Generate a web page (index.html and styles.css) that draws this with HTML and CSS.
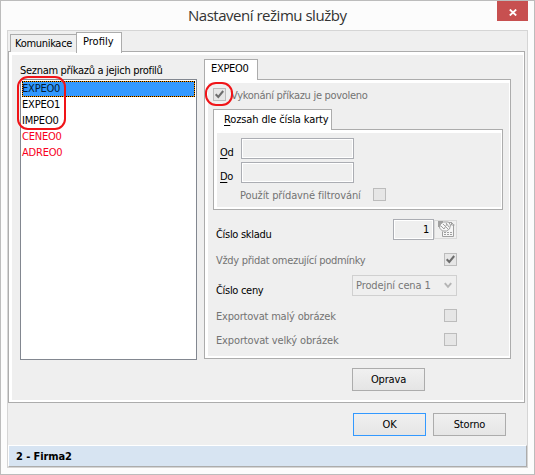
FILE: index.html
```html
<!DOCTYPE html>
<html lang="cs">
<head>
<meta charset="utf-8">
<title>Nastavení režimu služby</title>
<link rel="stylesheet" href="styles.css">
</head>
<body>
<div class="window">
  <header class="titlebar">
    <h1>Nastavení režimu služby</h1>
    <button class="close" aria-label="Zavřít"><svg width="8" height="7" viewBox="0 0 8 7"><path d="M.8.5 7.2 6.5M7.2.5.8 6.5"/></svg></button>
  </header>
  <main class="client">
    <nav class="tabs">
      <div class="tab inactive">Komunikace</div>
      <div class="tab active">Profily</div>
    </nav>
    <section class="page">
      <div class="left">
        <div class="caption">Seznam příkazů a jejich profilů</div>
        <div class="list">
          <div class="item selected">EXPEO0</div>
          <div class="item">EXPEO1</div>
          <div class="item">IMPEO0</div>
          <div class="item red">CENEO0</div>
          <div class="item red">ADREO0</div>
          <div class="mark mark-list"></div>
        </div>
      </div>
      <div class="right">
        <div class="tab profile-tab">EXPEO0</div>
        <div class="profile">
          <div class="enable">
            <span class="check"><svg width="11" height="11" viewBox="0 0 11 11"><path d="M1.7 5.2 4.3 8 9.2 2"/></svg></span>
            <span class="grey">Vykonání příkazu je povoleno</span>
            <div class="mark mark-check"></div>
          </div>
          <div class="tab range-tab"><u>R</u>ozsah dle čísla karty</div>
          <div class="range">
            <div class="field"><label><u>O</u>d</label><span class="input"></span></div>
            <div class="field"><label><u>D</u>o</label><span class="input"></span></div>
            <div class="filter"><span class="grey">Použít přídavné filtrování</span><span class="check"></span></div>
          </div>
          <div class="row stock"><label>Číslo skladu</label>
            <span class="control"><span class="input number">1</span><span class="lookup"><svg width="17" height="17" viewBox="0 0 17 17"><path class="fill" d="M0 0h5v2L2 6H0z"/><path class="paper" d="M7.5 1.5h6l2 2v12h-11v-5"/><path d="M13.5 1v3h3M6 11.5h2m1 0h2m1 0h2M6 13.5h2m1 0h2m1 0h2"/><path class="paper" d="m2.5 3 3-2h5l2 3-1 4-3 2h-4l-3-3z"/><path d="m5 3 5 5M8 2l3 4M9 3 6 8M3 5l3 3"/></svg></span></span></div>
          <div class="row always"><label class="grey">Vždy přidat omezující podmínky</label><span class="check"><svg width="11" height="11" viewBox="0 0 11 11"><path d="M1.7 5.2 4.3 8 9.2 2"/></svg></span></div>
          <div class="row price"><label>Číslo ceny</label><span class="select"><span>Prodejní cena 1</span><svg width="8" height="7" viewBox="0 0 8 7"><path d="M.8 1.2 4 4.8 7.2 1.2"/></svg></span></div>
          <div class="row small"><label class="grey">Exportovat malý obrázek</label><span class="check"></span></div>
          <div class="row large"><label class="grey">Exportovat velký obrázek</label><span class="check"></span></div>
        </div>
        <button class="button edit">Oprava</button>
      </div>
    </section>
    <div class="actions">
      <button class="button default">OK</button>
      <button class="button">Storno</button>
    </div>
    <footer class="status">2 - Firma2</footer>
  </main>
</div>
</body>
</html>
```
FILE: styles.css
```css
* { box-sizing: border-box; }
body { margin: 0; }
.window {
  width: 535px; height: 475px;
  border: 1px solid #bcbcbc;
  background: #fcfcfc;
  font: 11px/16px "DejaVu Sans Condensed", "DejaVu Sans", sans-serif;
  font-stretch: condensed;
  letter-spacing: -.3px;
  color: #000;
  white-space: nowrap;
  overflow: hidden;
}
.titlebar { height: 29px; display: flex; justify-content: flex-end; }
h1 {
  flex: 1; margin: 0; padding-left: 187px;
  font: 400 15px/28px "Open Sans", sans-serif;
  letter-spacing: -.48px;
  color: #333;
}
.close { width: 31px; height: 20px; margin-right: 6px; padding: 2px 0 0; border: 0; background: #c75050; display: grid; place-items: center; }
.close path { stroke: #fff; stroke-width: 1.8; fill: none; }
.client {
  width: 521px; height: 438px; margin-left: 6px;
  border: 1px solid #d5d5d5; background: #efefef;
}
.tabs { display: flex; align-items: flex-end; height: 21px; padding-left: 2px; }
.tab { border: 1px solid #acacac; border-bottom: 0; background: #fff; }
.inactive { width: 66px; height: 18px; border-right: 0; padding: 1px 0 0 4px; background: #efefef; }
.active { width: 46px; height: 21px; padding: 1px 0 0 6px; margin-bottom: -1px; position: relative; letter-spacing: 0; }
.page {
  width: 517px; height: 352px; margin-top: -1px;
  border: 1px solid #acacac; background: #efefef;
  box-shadow: inset 3px 3px #fff, inset -1px -2px #fff;
  display: flex; padding-left: 11px;
}
.left { width: 177px; padding-top: 11px; }
.caption { height: 16px; }
.list {
  position: relative; width: 177px; height: 281px;
  border: 1px solid #828790; background: #fff; padding: 1px;
}
.item { height: 16px; line-height: 16px; letter-spacing: -.2px; }
.selected {
  border: 1px dotted #000; line-height: 14px; text-indent: -1px; color: #001a35;
  background: linear-gradient(#39f, #39f) padding-box, linear-gradient(#f90, #f90) border-box;
}
.red { color: #f8001c; }
.mark { position: absolute; border: 2px solid #f01418; pointer-events: none; }
.mark-list { left: -4px; top: -4px; width: 49px; height: 54px; border-radius: 11px; }
.right { margin-left: 7px; padding-top: 7px; }
.profile-tab { width: 54px; height: 20px; padding: 1px 0 0 6px; }
.profile {
  width: 307px; height: 280px;
  border: 1px solid #acacac; background: #efefef;
  box-shadow: inset 3px 3px #fff, inset -1px -2px #fff;
  padding: 8px 0 0 8px;
}
.profile-tab, .range-tab { position: relative; }
.profile-tab::after, .range-tab::after, .active::after {
  content: ""; position: absolute; left: 0; right: 0; bottom: -2px; height: 2px; background: #fff;
}
.grey { color: #737373; }
.enable { position: relative; height: 21px; display: flex; }
.enable .grey { margin-left: 5px; }
.check { flex: none; width: 13px; height: 13px; border: 1px solid #bcbcbc; background: #e6e6e6; display: block; }
.check svg { display: block; }
.check path { stroke: #6d6d6d; stroke-width: 2; fill: none; }
.mark-check { left: -8px; top: -6px; width: 28px; height: 24px; border-radius: 11px; }
.range-tab { width: 119px; height: 20px; padding: 2px 0 0 10px; letter-spacing: -.12px; }
.range {
  width: 290px; height: 81px;
  border: 1px solid #acacac; background: #efefef;
  box-shadow: inset 3px 3px #fff, inset -1px -2px #fff;
  padding: 8px 0 0 6px;
}
.field { display: flex; height: 24px; }
.field label { width: 21px; padding-top: 7px; }
.input { width: 113px; height: 21px; border: 1px solid #abadb3; box-shadow: inset 0 0 0 1px #fff; }
u { text-underline-offset: 2px; }
.filter { display: flex; padding: 2px 0 0 20px; }
.filter .grey { width: 133px; letter-spacing: -.1px; }
.row { display: flex; justify-content: space-between; width: 244px; padding-left: 3px; }
.row label { padding-top: 8px; }
.stock { height: 34px; margin-top: 9px; }
.control { display: flex; }
.number { width: 41px; padding: 2px 4px 0 0; text-align: right; }
.lookup { width: 23px; height: 19px; margin-top: 1px; border: 1px solid #d9d9d9; display: block; padding-left: 3px; }
.lookup svg { display: block; }
.lookup path { stroke: #a0a0a0; stroke-width: 1; fill: none; }
.lookup .fill { fill: #a0a0a0; stroke: none; }
.lookup .paper { fill: #f6f6f6; }
.always { height: 22px; }
.always label, .small label, .large label { padding-top: 0; }
.small label { letter-spacing: -.2px; }
.large label { letter-spacing: -.14px; }
.price { height: 34px; }
.select { width: 105px; height: 21px; border: 1px solid #d0d0d0; display: flex; justify-content: space-between; align-items: center; padding: 0 4px 0 3px; color: #777; letter-spacing: -.1px; }
.select path { stroke: #b5b5b5; stroke-width: 2; fill: none; }
.small { height: 24px; }
.button {
  display: block; width: 73px; height: 23px; padding: 1px 0 0;
  border: 1px solid #acacac; background: linear-gradient(#f0f0f0, #e5e5e5);
  color: #000; font: inherit; letter-spacing: -.15px;
}
.edit { margin: 9px 0 0 148px; }
.actions { display: flex; gap: 7px; padding: 10px 0 0 345px; height: 42px; }
.button.default { border-color: #39f; }
.status {
  height: 22px; border: 1px solid; border-color: #fff #acacac #acacac #fff;
  background: #d7e4f2; padding-left: 7px; font-weight: 700; line-height: 22px; letter-spacing: -.1px;
}
```
